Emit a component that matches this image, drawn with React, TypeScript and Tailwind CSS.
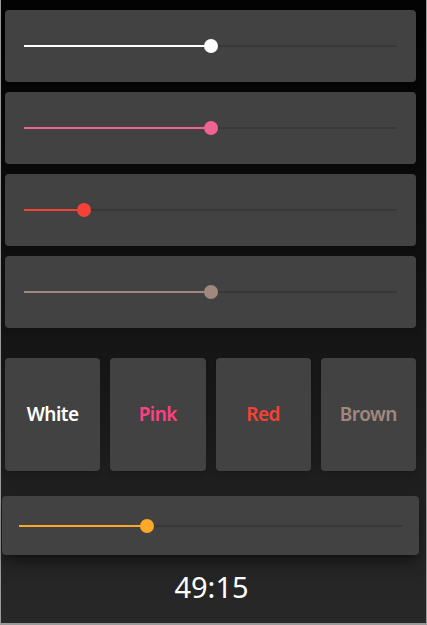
import React from 'react';

interface SliderProps {
  value: number;
  color: string;
  thumb: string;
}

// Track + thumb, value in percent
function Slider({ value, color, thumb }: SliderProps) {
  return (
    <div className="relative h-[14px] w-full">
      <div className="absolute left-0 right-0 top-[6px] h-[2px] bg-[#383838]" />
      <div className={`absolute left-0 top-[6px] h-[2px] ${color}`} style={{ width: `${value}%` }} />
      <div
        className={`absolute top-0 h-[14px] w-[14px] -translate-x-1/2 rounded-full ${thumb}`}
        style={{ left: `${value}%` }}
      />
    </div>
  );
}

const sliders = [
  { value: 50, color: 'bg-white', thumb: 'bg-white' },
  { value: 50, color: 'bg-[#f06292]', thumb: 'bg-[#f06292]' },
  { value: 16, color: 'bg-[#f44336]', thumb: 'bg-[#f44336]' },
  { value: 50, color: 'bg-[#a1887f]', thumb: 'bg-[#a1887f]' },
];

const buttons = [
  { label: 'White', color: 'text-white' },
  { label: 'Pink', color: 'text-[#ff4081]' },
  { label: 'Red', color: 'text-[#f44336]' },
  { label: 'Brown', color: 'text-[#a1887f]' },
];

export default function App() {
  return (
    <div
      className="flex h-[625px] w-[427px] flex-col border-x border-b-2 border-[#9a9a9a] bg-gradient-to-b from-[#030303] to-[#282828]"
      style={{ fontFamily: '"Noto Sans", "DejaVu Sans", sans-serif' }}
    >
      <div className="flex flex-col gap-[10px] pl-[4px] pr-[10px] pt-[10px]">
        {sliders.map((s, i) => (
          <div key={i} className="flex h-[72px] items-center rounded-[4px] bg-[#424242] px-[19px] shadow-md">
            <Slider value={s.value} color={s.color} thumb={s.thumb} />
          </div>
        ))}
      </div>

      <div className="mt-[30px] grid grid-cols-4 gap-[10px] pl-[4px] pr-[10px]">
        {buttons.map((b) => (
          <div
            key={b.label}
            className={`flex h-[113px] items-center justify-center rounded-[4px] bg-[#424242] text-[19px] font-semibold tracking-[-0.5px] shadow-md ${b.color}`}
          >
            {b.label}
          </div>
        ))}
      </div>

      <div className="ml-[1px] mr-[7px] mt-[25px] flex h-[59px] items-center rounded-[4px] bg-[#424242] px-[17px] shadow-lg shadow-black/40">
        <Slider value={33.5} color="bg-[#ffa726]" thumb="bg-[#ffa726]" />
      </div>

      <div className="flex flex-1 items-center justify-center pb-[4px] pr-[4px] text-[29px] text-white">49:15</div>
    </div>
  );
}
